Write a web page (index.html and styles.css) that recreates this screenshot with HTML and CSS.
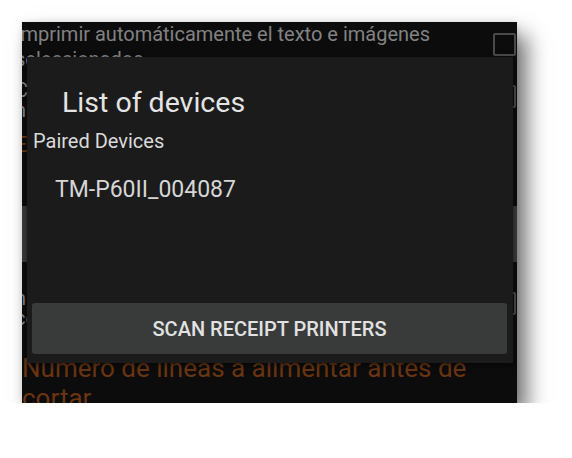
FILE: index.html
```html
<!DOCTYPE html>
<html lang="es">
<head>
<meta charset="utf-8">
<title>List of devices</title>
<link rel="stylesheet" href="styles.css">
</head>
<body>
<div class="screen">
  <div class="bg">
    <div class="row row1">
      <div class="label gray">Imprimir automáticamente el texto e imágenes seleccionados</div>
      <div class="checkbox cb1"></div>
    </div>
    <div class="row row2">
      <div class="label gray tight">Cortar papel después de imprimir<br>nuevo documento</div>
      <div class="checkbox cb2"></div>
    </div>
    <div class="row row3">
      <div class="label orange tall">Escala de impresión del texto en el ticket de venta</div>
    </div>
    <div class="field"></div>
    <div class="row row5">
      <div class="label gray tight">número de copias<br>con logo</div>
      <div class="checkbox cb3"></div>
    </div>
    <div class="row row6">
      <div class="label orange big">Numero de lineas a alimentar antes de cortar</div>
    </div>
  </div>

  <div class="dialog">
    <div class="title">List of devices</div>
    <div class="section">Paired Devices</div>
    <div class="device">TM-P60II_004087</div>
    <button class="scan">SCAN RECEIPT PRINTERS</button>
  </div>
</div>
</body>
</html>
```

FILE: styles.css
```css
html, body {
  margin: 0;
  padding: 0;
  background: #ffffff;
}

body {
  padding: 22px 0 0 22px;
  font-family: Roboto, "Liberation Sans", sans-serif;
}

.screen {
  position: relative;
  width: 495px;
  height: 381px;
  overflow: hidden;
  background: #0c0c0c;
  box-shadow: 10px 13px 20px rgba(0, 0, 0, 0.55), 0 0 6px rgba(0, 0, 0, 0.12);
}

.bg {
  display: flex;
  flex-direction: column;
  margin-left: -7px;
}

.row {
  display: flex;
  align-items: flex-start;
  box-sizing: border-box;
}

.label {
  flex: 1;
  min-width: 0;
}

.gray {
  color: #828282;
  font-size: 20px;
  line-height: 25px;
}

.gray.tight {
  line-height: 20px;
}

.orange {
  color: #6a3510;
  font-size: 22px;
  line-height: 34px;
}

.orange.big {
  font-size: 26px;
  line-height: 30px;
}

.row1 {
  height: 53px;
}

.row2 {
  height: 53px;
  padding-top: 5px;
}

.row3 {
  height: 78px;
}

.field {
  height: 56px;
  background: #3a3a3a;
}

.row5 {
  height: 87px;
  padding-top: 26px;
}

.row6 {
  margin-top: 4px;
  padding-left: 7px;
}

.checkbox {
  width: 19px;
  height: 19px;
  border: 2px solid #4a4a4a;
  border-radius: 2px;
  margin-right: 1px;
  flex: none;
}

.cb1 {
  margin-top: 11px;
}

.cb2 {
  margin-top: 5px;
}

.cb3 {
  margin-top: 4px;
}

.dialog {
  position: absolute;
  left: 5px;
  top: 35px;
  width: 486px;
  height: 306px;
  box-sizing: border-box;
  background: #1b1b1b;
  box-shadow: 0 2px 6px rgba(0, 0, 0, 0.5);
  display: flex;
  flex-direction: column;
  padding: 30px 6px 9px 5px;
}

.title {
  color: #e4e4e4;
  font-size: 28.5px;
  line-height: 32px;
  padding-left: 30px;
}

.section {
  color: #dadada;
  font-size: 20px;
  line-height: 22px;
  margin-top: 11px;
  padding-left: 1px;
}

.device {
  color: #d6d6d6;
  font-size: 23px;
  line-height: 26px;
  margin-top: 25px;
  padding-left: 23px;
}

.scan {
  margin-top: auto;
  height: 51px;
  border: none;
  border-radius: 3px;
  background: #393b3b;
  color: #e2e2e2;
  font-family: Roboto, "Liberation Sans", sans-serif;
  font-size: 20px;
  font-weight: 500;
  padding: 0;
}
```
